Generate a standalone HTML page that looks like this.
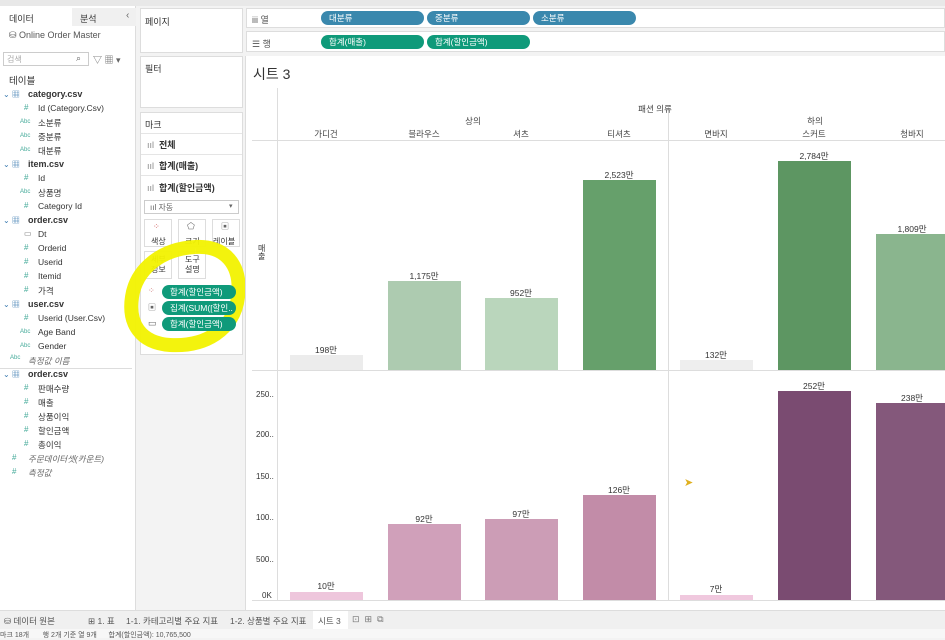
<!DOCTYPE html>
<html><head><meta charset="utf-8"><style>
*{margin:0;padding:0;box-sizing:border-box}
body{width:945px;height:638px;overflow:hidden;background:#f3f3f3;font-family:"Liberation Sans","Noto Sans CJK KR",sans-serif;font-size:9px;color:#333;position:relative}
.a{position:absolute}
.t{position:absolute;white-space:nowrap}
.pill{position:absolute;height:14px;border-radius:7px;color:#fff;font-size:8.5px;line-height:14px;padding-left:8px;white-space:nowrap;overflow:hidden}
.blue{background:#3a88ad}.green{background:#0f9a7a}
.bar{position:absolute}
.lbl{position:absolute;font-size:8.5px;color:#333;text-align:center;width:80px}
.hdr{position:absolute;font-size:8.5px;color:#444;text-align:center;width:90px}
</style></head><body>
<div class="a" style="left:0;top:0;width:945px;height:6px;background:#e8e8e8"></div>
<div class="a" style="left:0;top:6px;width:136px;height:604px;background:#fff;border-right:1px solid #ddd"></div>
<div class="a" style="left:72px;top:8px;width:64px;height:18px;background:#f0f0f0"></div>
<div class="t" style="left:9px;top:12px;font-size:9px">데이터</div>
<div class="t" style="left:80px;top:12px;font-size:9px">분석</div>
<div class="t" style="left:126px;top:10px;font-size:10px;color:#666">‹</div>
<div class="t" style="left:9px;top:30px;font-size:9px;color:#555">⛁ Online Order Master</div>
<div class="a" style="left:3px;top:52px;width:86px;height:14px;border:1px solid #ccc;background:#fff"></div>
<div class="t" style="left:7px;top:54px;font-size:8px;color:#aaa">검색</div>
<div class="t" style="left:76px;top:53px;font-size:9px;color:#666">⌕</div>
<div class="t" style="left:93px;top:53px;font-size:9px;color:#666">▽ ▦ ▾</div>
<div class="t" style="left:9px;top:73px;font-size:9.5px">테이블</div>
<div id="tree"></div>
<div class="a" style="left:140px;top:8px;width:103px;height:45px;background:#fff;border:1px solid #ddd"></div>
<div class="t" style="left:145px;top:15px">페이지</div>
<div class="a" style="left:140px;top:56px;width:103px;height:52px;background:#fff;border:1px solid #ddd"></div>
<div class="t" style="left:145px;top:62px">필터</div>
<div class="a" style="left:140px;top:112px;width:103px;height:243px;background:#fff;border:1px solid #ddd"></div>
<div class="t" style="left:145px;top:118px">마크</div>
<div class="a" style="left:141px;top:133px;width:101px;height:1px;background:#e5e5e5"></div>
<div class="t" style="left:147px;top:138px;font-size:9px"><span style="color:#888">ııl</span> &nbsp;<b>전체</b></div>
<div class="a" style="left:141px;top:154px;width:101px;height:1px;background:#e5e5e5"></div>
<div class="t" style="left:147px;top:159px;font-size:9px"><span style="color:#888">ııl</span> &nbsp;<b>합계(매출)</b></div>
<div class="a" style="left:141px;top:175px;width:101px;height:1px;background:#e5e5e5"></div>
<div class="t" style="left:147px;top:181px;font-size:9px"><span style="color:#888">ııl</span> &nbsp;<b>합계(할인금액)</b></div>
<div class="a" style="left:144px;top:200px;width:95px;height:14px;border:1px solid #ccc"></div>
<div class="t" style="left:150px;top:202px;font-size:8px;color:#666">ııl 자동</div>
<div class="t" style="left:229px;top:202px;font-size:7px;color:#666">▾</div>
<div class="a" style="left:144px;top:219px;width:28px;height:28px;border:1px solid #ddd"></div>
<div class="a" style="left:178px;top:219px;width:28px;height:28px;border:1px solid #ddd"></div>
<div class="a" style="left:212px;top:219px;width:28px;height:28px;border:1px solid #ddd"></div>
<div class="t" style="left:153px;top:222px;font-size:8px;color:#c55">⁘</div>
<div class="t" style="left:187px;top:221px;font-size:9px;color:#666">⬠</div>
<div class="t" style="left:221px;top:221px;font-size:8px;color:#666">▣</div>
<div class="t" style="left:151px;top:236px;font-size:8px">색상</div>
<div class="t" style="left:185px;top:236px;font-size:8px">크기</div>
<div class="t" style="left:213px;top:236px;font-size:8px">레이블</div>
<div class="a" style="left:144px;top:251px;width:28px;height:28px;border:1px solid #ddd"></div>
<div class="a" style="left:178px;top:251px;width:28px;height:28px;border:1px solid #ddd"></div>
<div class="t" style="left:151px;top:255px;font-size:8px;line-height:10px;text-align:center">세부<br>정보</div>
<div class="t" style="left:185px;top:255px;font-size:8px;line-height:10px;text-align:center">도구<br>설명</div>
<svg class="a" style="left:120px;top:235px" width="130" height="125"><path d="M75 12 C105 10 122 30 118 62 C114 95 85 112 50 110 C20 108 8 88 12 62 C16 35 40 14 75 12" fill="none" stroke="#f2f200" stroke-width="14" opacity="0.95"/></svg>
<div class="t" style="left:148px;top:286px;font-size:8px;color:#c77">⁘</div>
<div class="pill green" style="left:162px;top:285px;width:74px">합계(할인금액)</div>
<div class="t" style="left:148px;top:302px;font-size:8px;color:#666">▣</div>
<div class="pill green" style="left:162px;top:301px;width:74px">집계(SUM([할인..</div>
<div class="t" style="left:148px;top:318px;font-size:9px;color:#666">▭</div>
<div class="pill green" style="left:162px;top:317px;width:74px">합계(할인금액)</div>
<div class="a" style="left:246px;top:8px;width:699px;height:20px;background:#fff;border:1px solid #ddd"></div>
<div class="t" style="left:252px;top:13px;color:#555">iii 열</div>
<div class="pill blue" style="left:321px;top:11px;width:103px">대분류</div>
<div class="pill blue" style="left:427px;top:11px;width:103px">중분류</div>
<div class="pill blue" style="left:533px;top:11px;width:103px">소분류</div>
<div class="a" style="left:246px;top:31px;width:699px;height:21px;background:#fff;border:1px solid #ddd"></div>
<div class="t" style="left:252px;top:37px;color:#555">☰ 행</div>
<div class="pill green" style="left:321px;top:35px;width:103px">합계(매출)</div>
<div class="pill green" style="left:427px;top:35px;width:103px">합계(할인금액)</div>
<div class="a" style="left:245px;top:56px;width:700px;height:554px;background:#fff;border-left:1px solid #ddd"></div>
<div class="t" style="left:253px;top:64px;font-size:14px;color:#333">시트 3</div>
<div class="a" style="left:277px;top:88px;width:1px;height:512px;background:#ddd"></div>
<div class="a" style="left:668px;top:107px;width:1px;height:493px;background:#ddd"></div>
<div class="a" style="left:252px;top:140px;width:693px;height:1px;background:#ddd"></div>
<div class="a" style="left:252px;top:370px;width:693px;height:1px;background:#ddd"></div>
<div class="a" style="left:252px;top:600px;width:693px;height:1px;background:#ddd"></div>
<div class="hdr" style="left:610px;top:103px">패션 의류</div>
<div class="hdr" style="left:428px;top:115px">상의</div>
<div class="hdr" style="left:770px;top:115px">하의</div>
<div class="hdr" style="left:281px;top:128px">가디건</div>
<div class="hdr" style="left:379px;top:128px">블라우스</div>
<div class="hdr" style="left:476px;top:128px">셔츠</div>
<div class="hdr" style="left:574px;top:128px">티셔츠</div>
<div class="hdr" style="left:671px;top:128px">면바지</div>
<div class="hdr" style="left:769px;top:128px">스커트</div>
<div class="hdr" style="left:867px;top:128px">청바지</div>
<div class="t" style="left:258px;top:245px;font-size:8px;line-height:8px">매<br>출</div>
<div class="bar" style="left:290px;top:355px;width:73px;height:15px;background:#ececec"></div>
<div class="lbl" style="left:286px;top:344px">198만</div>
<div class="bar" style="left:388px;top:281px;width:73px;height:89px;background:#adcbb0"></div>
<div class="lbl" style="left:384px;top:270px">1,175만</div>
<div class="bar" style="left:485px;top:298px;width:73px;height:72px;background:#bad6bc"></div>
<div class="lbl" style="left:481px;top:287px">952만</div>
<div class="bar" style="left:583px;top:180px;width:73px;height:190px;background:#66a06b"></div>
<div class="lbl" style="left:579px;top:169px">2,523만</div>
<div class="bar" style="left:680px;top:360px;width:73px;height:10px;background:#eeeeee"></div>
<div class="lbl" style="left:676px;top:349px">132만</div>
<div class="bar" style="left:778px;top:161px;width:73px;height:209px;background:#5d9662"></div>
<div class="lbl" style="left:774px;top:150px">2,784만</div>
<div class="bar" style="left:876px;top:234px;width:69px;height:136px;background:#8ab58e"></div>
<div class="lbl" style="left:872px;top:223px">1,809만</div>
<div class="t" style="left:256px;top:390px;font-size:8px">250..</div>
<div class="t" style="left:256px;top:430px;font-size:8px">200..</div>
<div class="t" style="left:256px;top:472px;font-size:8px">150..</div>
<div class="t" style="left:256px;top:513px;font-size:8px">100..</div>
<div class="t" style="left:256px;top:555px;font-size:8px">500..</div>
<div class="t" style="left:262px;top:591px;font-size:8px">0K</div>
<div class="bar" style="left:290px;top:592px;width:73px;height:8px;background:#eec6dc"></div>
<div class="lbl" style="left:286px;top:580px">10만</div>
<div class="bar" style="left:388px;top:524px;width:73px;height:76px;background:#d0a0ba"></div>
<div class="lbl" style="left:384px;top:513px">92만</div>
<div class="bar" style="left:485px;top:519px;width:73px;height:81px;background:#cc9db6"></div>
<div class="lbl" style="left:481px;top:508px">97만</div>
<div class="bar" style="left:583px;top:495px;width:73px;height:105px;background:#c28ca8"></div>
<div class="lbl" style="left:579px;top:484px">126만</div>
<div class="bar" style="left:680px;top:595px;width:73px;height:5px;background:#f0c8de"></div>
<div class="lbl" style="left:676px;top:583px">7만</div>
<div class="bar" style="left:778px;top:391px;width:73px;height:209px;background:#7a4b71"></div>
<div class="lbl" style="left:774px;top:380px">252만</div>
<div class="bar" style="left:876px;top:403px;width:69px;height:197px;background:#84587b"></div>
<div class="lbl" style="left:872px;top:392px">238만</div>
<div class="t" style="left:684px;top:476px;font-size:11px;color:#e0b020">➤</div>
<div class="a" style="left:0;top:610px;width:945px;height:19px;background:#f0f0f0;border-top:1px solid #ddd"></div>
<div class="t" style="left:4px;top:615px;font-size:8.5px;color:#555">⛁ 데이터 원본</div>
<div class="t" style="left:88px;top:615px;font-size:8.5px;color:#555">⊞ 1. 표</div>
<div class="t" style="left:126px;top:615px;font-size:8.5px;color:#555">1-1. 카테고리별 주요 지표</div>
<div class="t" style="left:230px;top:615px;font-size:8.5px;color:#555">1-2. 상품별 주요 지표</div>
<div class="a" style="left:313px;top:611px;width:35px;height:18px;background:#fff"></div>
<div class="t" style="left:318px;top:615px;font-size:8.5px;color:#555">시트 3</div>
<div class="t" style="left:352px;top:614px;font-size:9px;color:#777">⊡ &nbsp;⊞ &nbsp;⧉</div>
<div class="a" style="left:0;top:629px;width:945px;height:9px;background:#f7f7f7"></div>
<div class="t" style="left:0;top:630px;font-size:7px;color:#555">마크 18개 &nbsp;&nbsp;&nbsp;&nbsp;&nbsp;&nbsp;행 2개 기준 열 9개 &nbsp;&nbsp;&nbsp;&nbsp;&nbsp;합계(할인금액): 10,765,500</div>
<script>
var items=[["v▦","category.csv",1],["#","Id (Category.Csv)"],["Abc","소분류"],["Abc","중분류"],["Abc","대분류"],["v▦","item.csv",1],["#","Id"],["Abc","상품명"],["#","Category Id"],["v▦","order.csv",1],["▭","Dt"],["#","Orderid"],["#","Userid"],["#","Itemid"],["#","가격"],["v▦","user.csv",1],["#","Userid (User.Csv)"],["Abc","Age Band"],["Abc","Gender"],["Abc","측정값 이름",2],["v▦","order.csv",1],["#","판매수량"],["#","매출"],["#","상품이익"],["#","할인금액"],["#","총이익"],["#","주문데이터셋(카운트)",3],["#","측정값",3]];
var h="";items.forEach(function(it,i){var y=89+i*14;
if(it[2]==1){h+='<div class="t" style="left:3px;top:'+y+'px;font-size:8px;color:#3a7ab0">⌄ ▦</div><div class="t" style="left:28px;top:'+y+'px;font-size:9px;font-weight:bold">'+it[1]+'</div>';}
else if(it[2]>=2){var x=it[2]==2?10:12;h+='<div class="t" style="left:'+x+'px;top:'+y+'px;font-size:'+(it[0]=="Abc"?6:8)+'px;color:#4a9">'+it[0]+'</div><div class="t" style="left:28px;top:'+y+'px;font-size:8.5px;font-style:italic;color:#666">'+it[1]+'</div>';if(it[2]==2)h+='<div class="a" style="left:0;top:'+(y+13)+'px;width:132px;height:1px;background:#ddd"></div>';}
else{h+='<div class="t" style="left:'+(it[0]=="Abc"?20:24)+'px;top:'+(y+(it[0]=="Abc"?2:0))+'px;font-size:'+(it[0]=="Abc"?6:8)+'px;color:'+(it[0]=="▭"?"#777":"#4a9")+'">'+it[0]+'</div><div class="t" style="left:38px;top:'+y+'px;font-size:8.5px">'+it[1]+'</div>';}});
document.getElementById("tree").innerHTML=h;
</script>
</body></html>
